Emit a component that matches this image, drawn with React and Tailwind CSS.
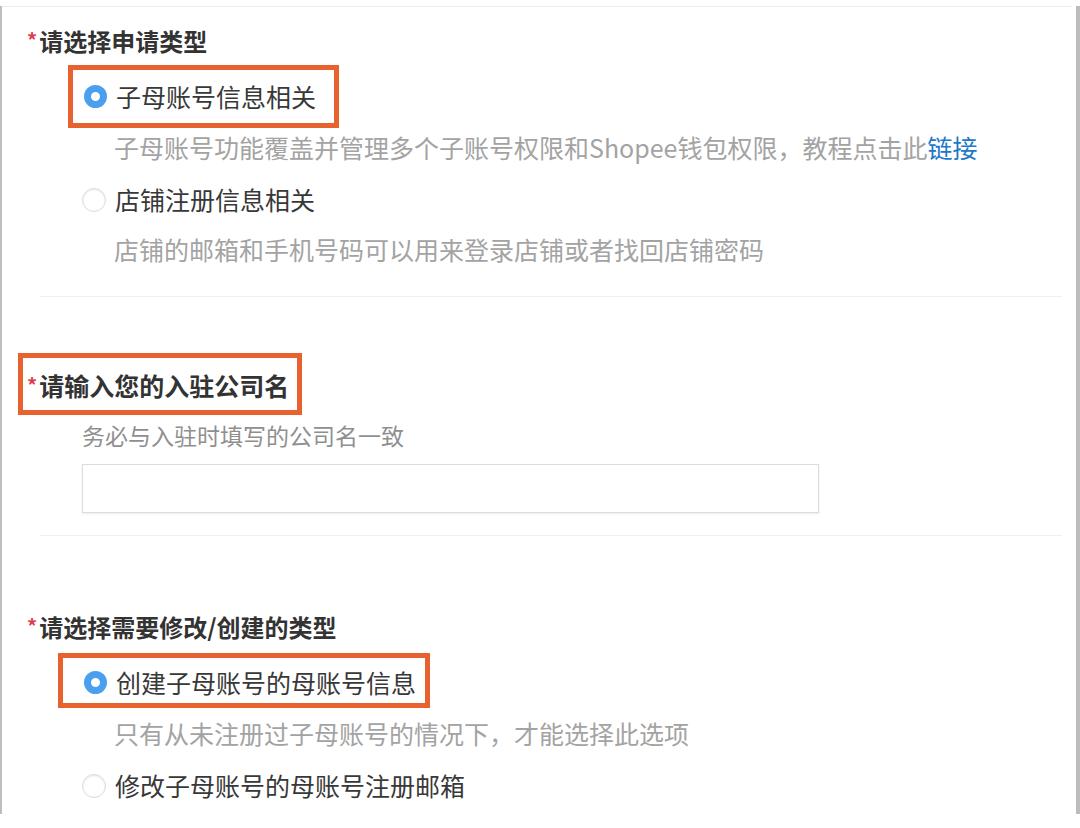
const font = { fontFamily: '"Noto Sans CJK SC", "Microsoft YaHei", sans-serif' };

function Star() {
  return <span className="text-[#e23a4e] text-[20px] font-bold leading-none mr-[2px] -mt-[2px]">*</span>;
}

function Radio({ checked }) {
  return checked ? (
    <span className="w-[23px] h-[23px] rounded-full border-[7px] border-[#4a9fee] bg-white shrink-0" />
  ) : (
    <span className="w-[24px] h-[24px] rounded-full border border-[#dcdcdc] bg-white shadow-[inset_0_1px_2px_rgba(0,0,0,0.1)] shrink-0" />
  );
}

function Option({ checked, label }) {
  return (
    <div className="flex items-center gap-[9px]">
      <Radio checked={checked} />
      <span className="text-[25px] text-[#383838]">{label}</span>
    </div>
  );
}

export default function App() {
  return (
    <div className="w-[1080px] h-[828px] bg-white overflow-hidden" style={font}>
      <div className="h-[808px] border-l-2 border-r-[4px] border-[#bdbdbd] relative">
        <div className="h-px bg-[#ececec] mt-[6px] mr-[4px]" />

        {/* 申请类型 */}
        <div className="h-[40px] mt-[14px] flex items-center pl-[25px]">
          <Star />
          <span className="text-[24px] font-bold text-[#333]">请选择申请类型</span>
        </div>
        <div className="mt-[4px] ml-[66px] w-[271px] h-[63px] border-[5px] border-[#e8622f] flex items-center pl-[11px]">
          <Option checked label="子母账号信息相关" />
        </div>
        <div className="h-[40px] flex items-center pl-[112px] text-[25px] text-[#a3a3a3]">
          子母账号功能覆盖并管理多个子账号权限和Shopee钱包权限，教程点击此
          <span className="text-[#1d78c8]">链接</span>
        </div>
        <div className="h-[64px] flex items-center pl-[80px]">
          <Option label="店铺注册信息相关" />
        </div>
        <div className="h-[36px] flex items-center pl-[112px] text-[25px] text-[#a3a3a3]">
          店铺的邮箱和手机号码可以用来登录店铺或者找回店铺密码
        </div>
        <div className="h-px bg-[#f0f0f0] mt-[28px] ml-[38px] mr-[14px]" />

        {/* 公司名 */}
        <div className="mt-[56px] ml-[16px] w-[284px] h-[62px] border-[5px] border-[#e8622f] flex items-center pl-[4px] pt-[4px]">
          <Star />
          <span className="text-[25px] font-bold text-[#333]">请输入您的入驻公司名</span>
        </div>
        <div className="h-[40px] flex items-center pl-[80px] text-[23px] text-[#8f8f8f]">
          务必与入驻时填写的公司名一致
        </div>
        <div className="mt-[9px] ml-[80px] w-[737px] h-[49px] border border-[#dcdcdc] shadow-[0_1px_2px_rgba(0,0,0,0.08)] bg-white" />
        <div className="h-px bg-[#f0f0f0] mt-[22px] ml-[38px] mr-[14px]" />

        {/* 修改/创建类型 */}
        <div className="h-[40px] mt-[71px] flex items-center pl-[25px]">
          <Star />
          <span className="text-[24px] font-bold text-[#333]">请选择需要修改/创建的类型</span>
        </div>
        <div className="mt-[6px] ml-[56px] w-[372px] h-[55px] border-[5px] border-[#e8622f] flex items-center pl-[21px] pt-[4px]">
          <Option checked label="创建子母账号的母账号信息" />
        </div>
        <div className="h-[52px] flex items-center pl-[112px] text-[25px] text-[#a3a3a3]">
          只有从未注册过子母账号的情况下，才能选择此选项
        </div>
        <div className="h-[52px] flex items-center pl-[80px]">
          <Option label="修改子母账号的母账号注册邮箱" />
        </div>
      </div>
    </div>
  );
}
